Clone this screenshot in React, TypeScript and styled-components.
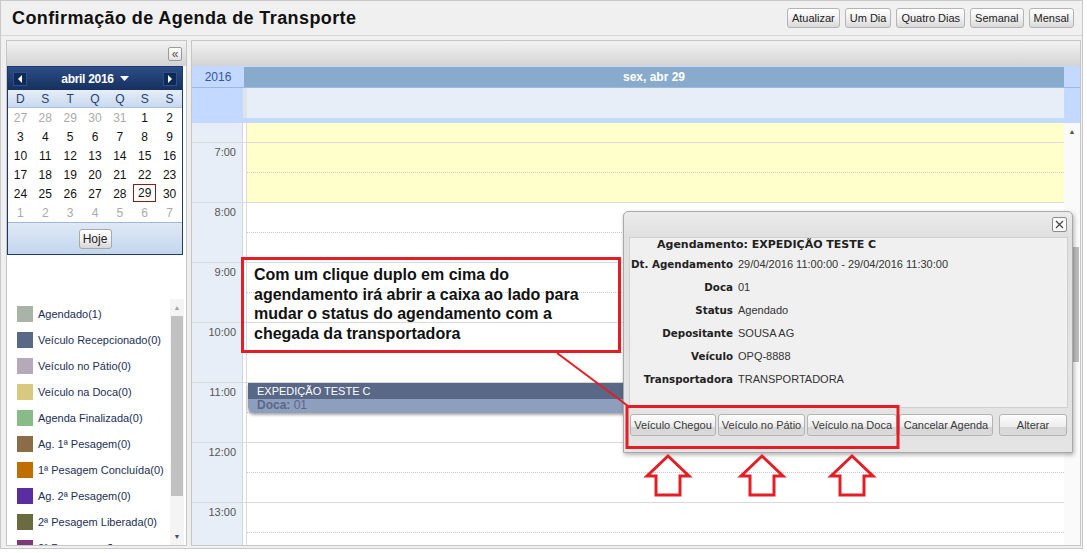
import React from "react";
import styled, { createGlobalStyle } from "styled-components";

const GlobalStyle = createGlobalStyle`
  html, body { margin: 0; padding: 0; background: #fff; }
  body { font-family: "Liberation Sans", Arial, sans-serif; color: #222; }
  * { box-sizing: border-box; }
`;

const RED = "#e41e26";

const viewButtons = ["Atualizar", "Um Dia", "Quatro Dias", "Semanal", "Mensal"];
const weekDays = ["D", "S", "T", "Q", "Q", "S", "S"];

type Day = { d: number; other?: boolean; sel?: boolean };
const weeks: Day[][] = [
  [
    { d: 27, other: true },
    { d: 28, other: true },
    { d: 29, other: true },
    { d: 30, other: true },
    { d: 31, other: true },
    { d: 1 },
    { d: 2 },
  ],
  [3, 4, 5, 6, 7, 8, 9].map((d) => ({ d })),
  [10, 11, 12, 13, 14, 15, 16].map((d) => ({ d })),
  [17, 18, 19, 20, 21, 22, 23].map((d) => ({ d })),
  [24, 25, 26, 27, 28, 29, 30].map((d) => ({ d, sel: d === 29 })),
  [1, 2, 3, 4, 5, 6, 7].map((d) => ({ d, other: true })),
];

const legend = [
  { label: "Agendado(1)", color: "#a9b3a7" },
  { label: "Veículo Recepcionado(0)", color: "#5a6887" },
  { label: "Veículo no Pátio(0)", color: "#b6a9ba" },
  { label: "Veículo na Doca(0)", color: "#d8c980" },
  { label: "Agenda Finalizada(0)", color: "#88bb88" },
  { label: "Ag. 1ª Pesagem(0)", color: "#8b6c46" },
  { label: "1ª Pesagem Concluída(0)", color: "#bf6e00" },
  { label: "Ag. 2ª Pesagem(0)", color: "#5a2ea0" },
  { label: "2ª Pesagem Liberada(0)", color: "#6b6b40" },
  { label: "2ª Pesagem não", color: "#7c3a7c" },
];

const hours = [
  { label: "", h: 20, off: true },
  { label: "7:00", h: 60, off: true },
  { label: "8:00", h: 60 },
  { label: "9:00", h: 60 },
  { label: "10:00", h: 60 },
  { label: "11:00", h: 60, event: true },
  { label: "12:00", h: 60 },
  { label: "13:00", h: 60 },
];

const details = [
  ["Dt. Agendamento", "29/04/2016 11:00:00 - 29/04/2016 11:30:00"],
  ["Doca", "01"],
  ["Status", "Agendado"],
  ["Depositante", "SOUSA AG"],
  ["Veículo", "OPQ-8888"],
  ["Transportadora", "TRANSPORTADORA"],
];

const popButtons = [
  { label: "Veículo Chegou", w: 86 },
  { label: "Veículo no Pátio", w: 87 },
  { label: "Veículo na Doca", w: 90 },
  { label: "Cancelar Agenda", w: 94 },
  { label: "Alterar", w: 68, gap: 4 },
];

export default function App() {
  return (
    <>
      <GlobalStyle />
      <Frame>
        <Header>
          <Title>Confirmação de Agenda de Transporte</Title>
          <ButtonBar>
            {viewButtons.map((b) => (
              <GrayButton key={b}>{b}</GrayButton>
            ))}
          </ButtonBar>
        </Header>

        <Body>
          <SidePanel>
            <PanelBar>
              <CollapseButton>«</CollapseButton>
            </PanelBar>
            <MiniCal>
              <CalNav>
                <NavButton>
                  <svg width="6" height="8" viewBox="0 0 6 8">
                    <path d="M5 0 L1 4 L5 8 Z" fill="#fff" />
                  </svg>
                </NavButton>
                <CalTitle>
                  abril 2016
                  <svg width="9" height="5" viewBox="0 0 9 5">
                    <path d="M0 0 H9 L4.5 5 Z" fill="#fff" />
                  </svg>
                </CalTitle>
                <NavButton>
                  <svg width="6" height="8" viewBox="0 0 6 8">
                    <path d="M1 0 L5 4 L1 8 Z" fill="#fff" />
                  </svg>
                </NavButton>
              </CalNav>
              <WeekHead>
                {weekDays.map((w, i) => (
                  <span key={i}>{w}</span>
                ))}
              </WeekHead>
              <DayGrid>
                {weeks.flat().map((c, i) => (
                  <DayCell key={i} $other={c.other} $sel={c.sel}>
                    {c.d}
                  </DayCell>
                ))}
              </DayGrid>
              <CalFooter>
                <TodayButton>Hoje</TodayButton>
              </CalFooter>
            </MiniCal>

            <LegendBox>
              <LegendList>
                {legend.map((l) => (
                  <LegendItem key={l.label}>
                    <Swatch $color={l.color} />
                    {l.label}
                  </LegendItem>
                ))}
              </LegendList>
              <LegendScroll>
                <ScrollArrow $dim>▲</ScrollArrow>
                <LegendThumb />
                <ScrollArrow>▼</ScrollArrow>
              </LegendScroll>
            </LegendBox>
          </SidePanel>

          <CalPanel>
            <PanelBar />
            <HeadRow>
              <YearCell>2016</YearCell>
              <DayHead>sex, abr 29</DayHead>
              <BlueGutter />
            </HeadRow>
            <AllDayRow>
              <BlueCell />
              <AllDaySlot />
              <BlueGutter />
            </AllDayRow>
            <Band />
            <TimeArea>
              <Grid>
                {hours.map((r, i) => (
                  <HourRow key={i} $h={r.h}>
                    <TimeCell>{r.label}</TimeCell>
                    <Slot $off={r.off}>
                      {r.h === 60 && <HalfLine />}
                      {r.event && (
                        <Event>
                          <EventTitle>EXPEDIÇÃO TESTE C</EventTitle>
                          <EventBody>
                            <b>Doca:</b> 01
                          </EventBody>
                        </Event>
                      )}
                    </Slot>
                  </HourRow>
                ))}
              </Grid>
              <VScroll>
                <ScrollArrow>▲</ScrollArrow>
                <VThumb />
              </VScroll>
            </TimeArea>
          </CalPanel>
        </Body>

        <Popup>
          <PopupHead>
            <CloseButton>
              <svg width="9" height="9" viewBox="0 0 9 9">
                <path d="M1 1 L8 8 M8 1 L1 8" stroke="#444" strokeWidth="1.2" />
              </svg>
            </CloseButton>
          </PopupHead>
          <PopupContent>
            <PopupTitle>Agendamento: EXPEDIÇÃO TESTE C</PopupTitle>
            <DetailGrid>
              {details.map(([k, v]) => (
                <React.Fragment key={k}>
                  <DetailLabel>{k}</DetailLabel>
                  <DetailValue>{v}</DetailValue>
                </React.Fragment>
              ))}
            </DetailGrid>
          </PopupContent>
          <PopupActions>
            {popButtons.map((b) => (
              <PopButton key={b.label} $w={b.w} $gap={b.gap}>
                {b.label}
              </PopButton>
            ))}
          </PopupActions>
        </Popup>

        <Callout>
          Com um clique duplo em cima do agendamento irá abrir a caixa ao lado para mudar o
          status do agendamento com a chegada da transportadora
        </Callout>

        <Marks width="1087" height="553" viewBox="0 0 1087 553">
          <line x1="557" y1="353" x2="628" y2="406" stroke={RED} strokeWidth="2" />
          <rect x="627" y="406.5" width="271" height="41" fill="none" stroke={RED} strokeWidth="3" />
          {[668, 762, 852].map((c) => (
            <polygon
              key={c}
              points={`${c},456 ${c + 21},476 ${c + 12},476 ${c + 12},495 ${c - 12},495 ${c - 12},476 ${c - 21},476`}
              fill="none"
              stroke={RED}
              strokeWidth="3"
              strokeLinejoin="miter"
            />
          ))}
        </Marks>
      </Frame>
    </>
  );
}

const Frame = styled.div`
  position: relative;
  width: 1083px;
  height: 549px;
  overflow: hidden;
  background: #f0f0f0;
  border: 1px solid #c9c9c9;
`;

const Header = styled.div`
  height: 35px;
  display: flex;
  align-items: center;
  justify-content: space-between;
  padding: 0 8px 0 11px;
  border-bottom: 1px solid #d6d6d6;
`;

const Title = styled.h1`
  margin: 0;
  font: bold 18px "Liberation Sans", Arial, sans-serif;
  letter-spacing: 0.4px;
  color: #111;
`;

const ButtonBar = styled.div`
  display: flex;
  gap: 5px;
`;

const GrayButton = styled.button`
  height: 20px;
  padding: 0 4px;
  font: 11px "Liberation Sans", Arial, sans-serif;
  color: #222;
  border: 1px solid #b4b4b4;
  border-radius: 3px;
  background: linear-gradient(#ffffff, #eeeeee 55%, #d9d9d9);
`;

const Body = styled.div`
  display: flex;
  gap: 4px;
  padding: 4px 1px 0 5px;
`;

const SidePanel = styled.div`
  width: 181px;
  height: 506px;
  display: flex;
  flex-direction: column;
  background: #fff;
  border: 1px solid #c6c6c6;
`;

const PanelBar = styled.div`
  height: 25px;
  flex: none;
  display: flex;
  align-items: center;
  justify-content: flex-end;
  padding-right: 4px;
  background: linear-gradient(#f2f2f2, #d3d3d3);
`;

const CollapseButton = styled.div`
  width: 14px;
  height: 14px;
  display: flex;
  align-items: center;
  justify-content: center;
  font-size: 12px;
  line-height: 1;
  color: #555;
  border: 1px solid #9a9a9a;
  border-radius: 2px;
  background: linear-gradient(#ffffff, #e2e2e2);
`;

const MiniCal = styled.div`
  width: 176px;
  flex: none;
  border: 1px solid #1d3a6e;
  font-size: 12px;
`;

const CalNav = styled.div`
  height: 23px;
  display: flex;
  align-items: center;
  justify-content: space-between;
  padding: 0 5px;
  background: linear-gradient(#2c4d86, #16305f);
`;

const NavButton = styled.div`
  width: 14px;
  height: 14px;
  display: flex;
  align-items: center;
  justify-content: center;
  background: #0e2a5a;
  border: 1px solid #2f4f86;
`;

const CalTitle = styled.div`
  display: flex;
  align-items: center;
  gap: 6px;
  color: #fff;
  font-weight: bold;
  font-size: 12px;
  letter-spacing: -0.3px;
`;

const WeekHead = styled.div`
  height: 18px;
  display: grid;
  grid-template-columns: repeat(7, 1fr);
  align-items: center;
  text-align: center;
  color: #28406d;
  background: linear-gradient(#e6eef8, #c8d9ef);
  border-bottom: 1px solid #a9c0de;
`;

const DayGrid = styled.div`
  display: grid;
  grid-template-columns: repeat(7, 1fr);
  grid-auto-rows: 19px;
  background: #fff;
`;

const DayCell = styled.div<{ $other?: boolean; $sel?: boolean }>`
  display: flex;
  align-items: center;
  justify-content: center;
  margin: ${(p) => (p.$sel ? "0 1px 1px" : "0")};
  color: ${(p) => (p.$other ? "#aaaaaa" : "#111")};
  border: ${(p) => (p.$sel ? "1px solid #8b1a1a" : "1px solid transparent")};
`;

const CalFooter = styled.div`
  height: 32px;
  display: flex;
  align-items: center;
  justify-content: center;
  border-top: 1px solid #9fb7d8;
  background: linear-gradient(#dfe9f6, #c3d6ee);
`;

const TodayButton = styled.button`
  width: 33px;
  height: 20px;
  padding: 0;
  font: 12px "Liberation Sans", Arial, sans-serif;
  color: #222;
  border: 1px solid #a8a8a8;
  border-radius: 3px;
  background: linear-gradient(#ffffff, #f0f0f0 55%, #d6d6d6);
`;

const LegendBox = styled.div`
  flex: 1;
  margin-top: 44px;
  display: flex;
  overflow: hidden;
`;

const LegendList = styled.div`
  flex: 1;
  padding: 7px 0 0 10px;
  overflow: hidden;
`;

const LegendItem = styled.div`
  height: 26px;
  display: flex;
  align-items: flex-start;
  gap: 5px;
  font-size: 11px;
  line-height: 16px;
  color: #1c2f52;
  white-space: nowrap;
`;

const Swatch = styled.span<{ $color: string }>`
  width: 16px;
  height: 16px;
  flex: none;
  background: ${(p) => p.$color};
`;

const LegendScroll = styled.div`
  width: 14px;
  margin-right: 2px;
  display: flex;
  flex-direction: column;
  background: #f4f4f4;
`;

const ScrollArrow = styled.div<{ $dim?: boolean }>`
  height: 17px;
  flex: none;
  display: flex;
  align-items: center;
  justify-content: center;
  font-size: 7px;
  color: ${(p) => (p.$dim ? "#a3a3a3" : "#505050")};
`;

const LegendThumb = styled.div`
  height: 180px;
  margin: 0 1px auto;
  background: #c1c1c1;
`;

const CalPanel = styled.div`
  flex: 1;
  height: 506px;
  display: flex;
  flex-direction: column;
  background: #fff;
  border: 1px solid #c6c6c6;
  overflow: hidden;
`;

const HeadRow = styled.div`
  height: 22px;
  flex: none;
  display: flex;
  border-top: 1px solid #c3d9ff;
  border-bottom: 1px solid #9db8d8;
`;

const YearCell = styled.div`
  width: 52px;
  display: flex;
  align-items: center;
  justify-content: center;
  background: #c3d9ff;
  color: #3355aa;
  font-size: 12px;
`;

const DayHead = styled.div`
  flex: 1;
  display: flex;
  align-items: center;
  justify-content: center;
  background: #88aacc;
  color: #fff;
  font-weight: bold;
  font-size: 12px;
`;

const BlueGutter = styled.div`
  width: 16px;
  background: #c3d9ff;
`;

const AllDayRow = styled.div`
  height: 30px;
  flex: none;
  display: flex;
  background: #c3d9ff;
`;

const BlueCell = styled.div`
  width: 51px;
`;

const AllDaySlot = styled.div`
  flex: 1;
  background: #e8eef7;
  border-left: 4px solid #dfe3ea;
`;

const Band = styled.div`
  height: 5px;
  flex: none;
  background: #c3d9ff;
`;

const TimeArea = styled.div`
  flex: 1;
  display: flex;
  overflow: hidden;
`;

const Grid = styled.div`
  flex: 1;
  overflow: hidden;
`;

const HourRow = styled.div<{ $h: number }>`
  height: ${(p) => p.$h}px;
  display: flex;
  border-bottom: 1px solid #dadada;
`;

const TimeCell = styled.div`
  width: 51px;
  flex: none;
  padding: 3px 6px 0 0;
  text-align: right;
  font-size: 11px;
  color: #555;
  background: #e8eef7;
  border-right: 1px solid #d0d7e2;
`;

const Slot = styled.div<{ $off?: boolean }>`
  position: relative;
  flex: 1;
  margin-left: 3px;
  border-left: 1px solid #dadada;
  background: ${(p) => (p.$off ? "#ffffcc" : "#fff")};
`;

const HalfLine = styled.div`
  height: 30px;
  border-bottom: 1px dotted #c8c8c8;
`;

const Event = styled.div`
  position: absolute;
  top: 0;
  left: 1px;
  right: 6px;
  height: 30px;
  border-radius: 0 0 6px 6px;
  overflow: hidden;
  box-shadow: 0 2px 3px rgba(0, 0, 0, 0.35);
  font-size: 11px;
`;

const EventTitle = styled.div`
  height: 16px;
  line-height: 17px;
  padding-left: 9px;
  background: #5a6887;
  color: #fff;
`;

const EventBody = styled.div`
  height: 14px;
  line-height: 13px;
  padding-left: 9px;
  background: #8e9fbd;
  color: #5a6887;
  font-size: 12px;
`;

const VScroll = styled.div`
  width: 16px;
  display: flex;
  flex-direction: column;
  background: #fafafa;
`;

const VThumb = styled.div`
  height: 115px;
  margin: 107px 1px 0;
  background: #bdbdbd;
`;

const Popup = styled.div`
  position: absolute;
  left: 622px;
  top: 210px;
  width: 450px;
  height: 242px;
  display: flex;
  flex-direction: column;
  background: linear-gradient(#ececec, #e0e0e0 10%, #e4e4e4);
  border: 1px solid #a9a9a9;
  border-radius: 5px 5px 0 0;
  box-shadow: 1px 2px 4px rgba(0, 0, 0, 0.3);
`;

const PopupHead = styled.div`
  height: 25px;
  flex: none;
  display: flex;
  align-items: center;
  justify-content: flex-end;
  padding-right: 5px;
`;

const CloseButton = styled.div`
  width: 15px;
  height: 15px;
  display: flex;
  align-items: center;
  justify-content: center;
  background: #fafafa;
  border: 1px solid #8c8c8c;
  border-radius: 2px;
`;

const PopupContent = styled.div`
  height: 171px;
  margin: 0 4px 0 5px;
  background: #f0f0f0;
  border: 1px solid #d0d0d0;
`;

const PopupTitle = styled.div`
  height: 14px;
  padding-left: 27px;
  font: bold 11px "DejaVu Sans", Verdana, sans-serif;
  line-height: 14px;
  color: #222;
`;

const DetailGrid = styled.div`
  display: grid;
  grid-template-columns: 103px 1fr;
  grid-auto-rows: 23px;
  column-gap: 5px;
  align-items: center;
`;

const DetailLabel = styled.div`
  text-align: right;
  font: bold 10.3px "DejaVu Sans", Verdana, sans-serif;
  color: #222;
  white-space: nowrap;
`;

const DetailValue = styled.div`
  font-size: 11px;
  color: #333;
`;

const PopupActions = styled.div`
  display: flex;
  gap: 2px;
  padding: 6px 0 0 6px;
`;

const PopButton = styled.button<{ $w: number; $gap?: number }>`
  width: ${(p) => p.$w}px;
  height: 22px;
  margin-left: ${(p) => p.$gap ?? 0}px;
  padding: 0;
  font: 11px "Liberation Sans", Arial, sans-serif;
  color: #3a3a3a;
  white-space: nowrap;
  border: 1px solid #b3b3b3;
  border-radius: 3px;
  background: linear-gradient(#fdfdfd, #ececec 60%, #d5d5d5 60%, #dcdcdc);
`;

const Callout = styled.div`
  position: absolute;
  left: 240px;
  top: 256px;
  width: 380px;
  height: 96px;
  padding: 5px 10px 0 10px;
  border: 3px solid ${RED};
  font: bold 16px "Liberation Sans", Arial, sans-serif;
  line-height: 19.5px;
  color: #111;
`;

const Marks = styled.svg`
  position: absolute;
  left: -1px;
  top: -1px;
  pointer-events: none;
`;
